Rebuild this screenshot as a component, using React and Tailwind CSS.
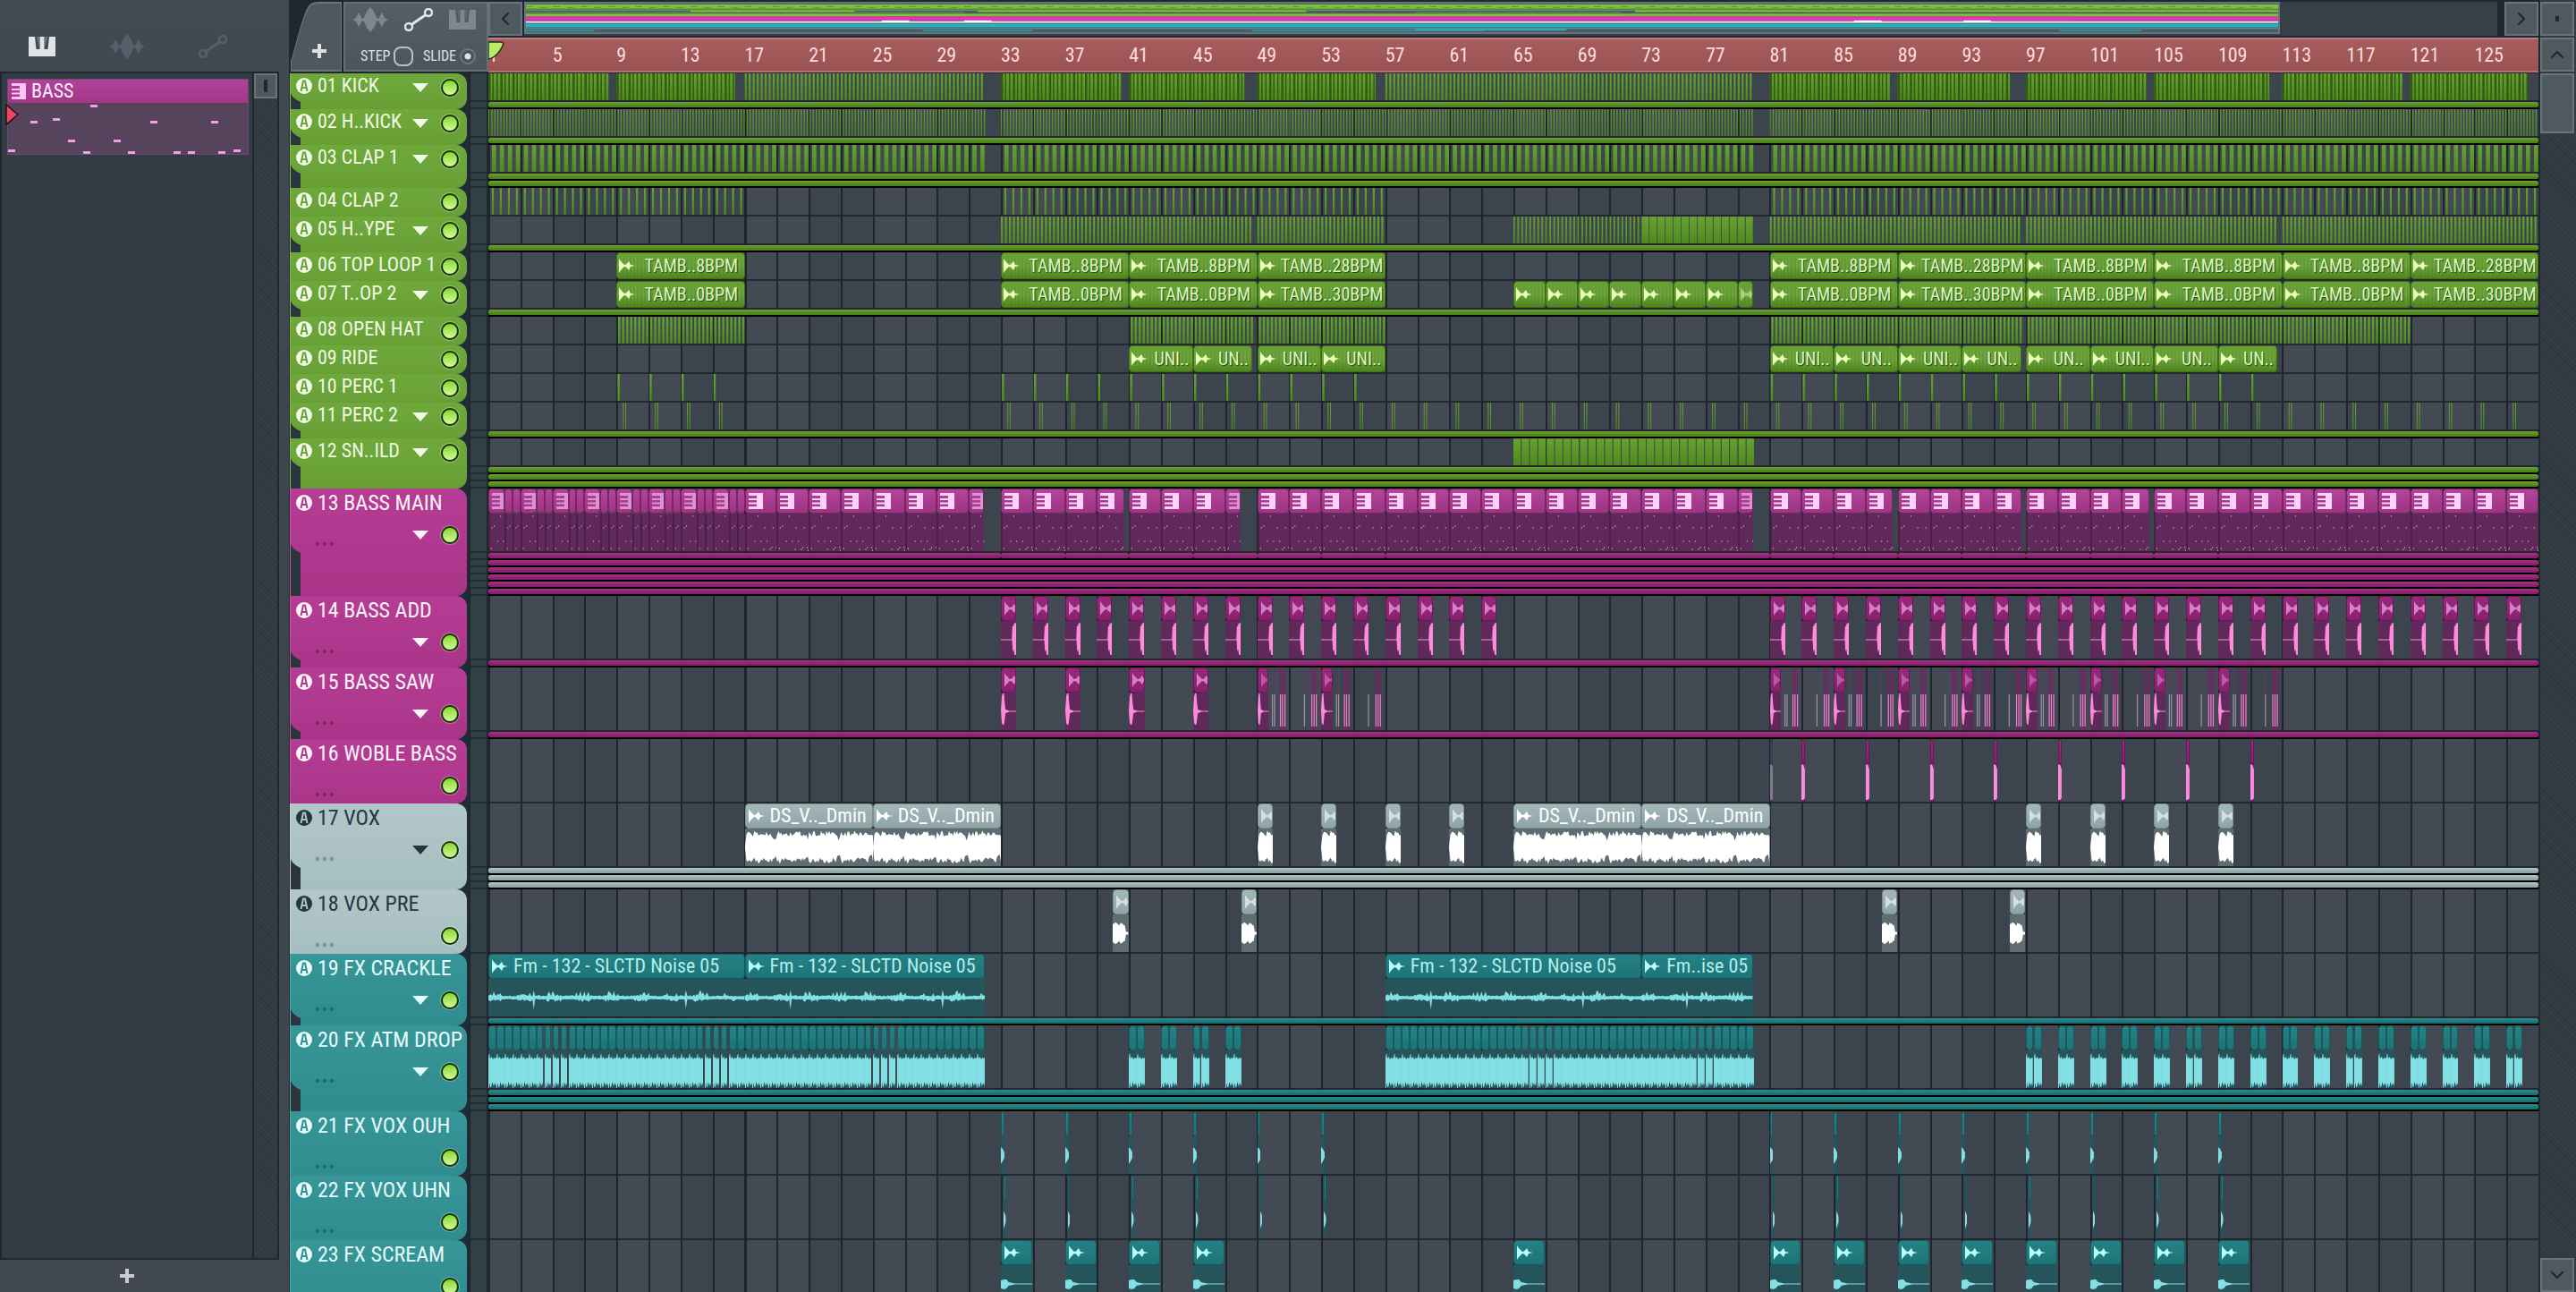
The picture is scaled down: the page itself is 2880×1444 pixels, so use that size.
import React, { useState } from "react";
import { ChevronDown, ChevronLeft, ChevronRight, ChevronUp } from "lucide-react";

const BARS = 128;

const themes = {
  green: {
    header: "bg-linear-to-b from-[#6fa93c] to-[#679f35] border-l-[#84bb52]",
    text: "text-[#f0f9e4]",
    badge: "text-[#6ba539]",
    dots: "bg-[#4c7c22]",
    head: "bg-linear-to-b from-[#68a034] via-[#619a2f] to-[#4f861e] border-[#3f7014]",
    body: "bg-[#3f5a2c]",
    lane: "bg-linear-to-b from-[#6aa036] via-[#568c24] to-[#4a7c1b]",
    label: "text-[#d9f5bd] text-shadow-[1px_1px_0_#2c4d10]",
    icon: "text-[#eaffb8]",
    wave: "#5b9429",
  },
  pink: {
    header: "bg-linear-to-b from-[#b53d93] to-[#a93589] border-l-[#c65aa8]",
    text: "text-[#fdf3fb]",
    badge: "text-[#b03a8e]",
    dots: "bg-[#84256a]",
    head: "bg-linear-to-b from-[#98297a] to-[#8a2070] border-[#6d1757]",
    body: "bg-[#5f2a5a]",
    lane: "bg-linear-to-b from-[#a23583] via-[#902573] to-[#861e6a]",
    label: "text-[#ffd7f6]",
    icon: "text-[#d67fc6]",
    wave: "#ff8adb",
  },
  vox: {
    header: "bg-linear-to-b from-[#b1c7ca] to-[#a7bec1] border-l-[#c4d6d8]",
    text: "text-[#22383c]",
    badge: "text-[#adc4c7]",
    dots: "bg-[#7d9396]",
    head: "bg-linear-to-b from-[#a3b7b9] to-[#90a5a7] border-[#7b9092]",
    body: "bg-[#5f6d73]",
    lane: "bg-linear-to-b from-[#b0c4c4] via-[#9cb0b0] to-[#8b9f9f]",
    label: "text-white",
    icon: "text-white",
    wave: "#ffffff",
  },
  teal: {
    header: "bg-linear-to-b from-[#379698] to-[#2f8c8f] border-l-[#55adae]",
    text: "text-[#e6fbfb]",
    badge: "text-[#339294]",
    dots: "bg-[#216c6f]",
    head: "bg-linear-to-b from-[#268184] to-[#1e7477] border-[#145c60]",
    body: "bg-[#25545b]",
    lane: "bg-linear-to-b from-[#31888a] via-[#207a7c] to-[#196c6f]",
    label: "text-[#b2eeee]",
    icon: "text-[#b5ffff]",
    wave: "#82e0e4",
  },
};

const range = (from, to, step) => {
  const out = [];
  for (let v = from; v < to - 0.001; v += step) out.push(v);
  return out;
};

const noise = (n) => {
  const v = Math.sin(n * 12.9898 + 4.1) * 43758.5453;
  return v - Math.floor(v);
};

const at = (starts, len, extra) => starts.map((start) => ({ start, len, ...extra }));

const bassMain = [
  ...range(1, 17, 2).flatMap((b) => [
    { start: b, len: 1, kind: "notes", icon: "faded" },
    { start: b + 1, len: 0.5, kind: "notes" },
    { start: b + 1.5, len: 0.5, kind: "notes" },
  ]),
  ...[17, 19, 21, 23, 25, 27, 29, 33, 35, 37, 41, 43, 45].map((b) => ({ start: b, len: 2, kind: "notes", icon: "solid" })),
  ...range(49, 79, 2).map((b) => ({ start: b, len: 2, kind: "notes", icon: "solid" })),
  ...[31, 47, 79].map((b) => ({ start: b, len: 0.95, kind: "notes", icon: "faded" })),
  ...range(81, 129, 2).map((b) => ({
    start: b,
    len: [87, 95, 103].includes(b) ? 1.7 : 2,
    kind: "notes",
    icon: "solid",
  })),
  { start: 39, len: 1.7, kind: "notes", icon: "solid" },
];

const loops = (a, b) => [
  ...at([9, 33, 41, 81, 97, 105, 113], 8, { label: a, icon: true, flat: true }),
  ...at([49, 89, 121], 8, { label: b, icon: true, flat: true }),
];

const everyFour = [...range(33, 57, 4), ...range(81, 113, 4)];

const atmStarts = [
  ...range(1, 32, 0.5),
  ...range(57, 80, 0.5),
  ...[...range(41, 49, 2), ...range(97, 129, 2)].flatMap((b) => [b, b + 0.5]),
];
const atmGated = [4, 4.5, 5, 5.5, 14, 14.5, 15, 15.5, 24.5, 25, 25.5, 26, 45, 65.5, 66, 66.5, 67, 76, 76.5, 77, 97, 107, 117, 127];

// stripes are [from bar, to bar, step, offset, width], blocks are [from bar, to bar]
const tracks = [
  {
    name: "01 KICK", theme: "green", subs: 1,
    blocks: [[1, 8.5], [9, 16.4], [33, 40.5], [41, 48.2], [49, 56.4], [81, 88.5], [89, 96], [97, 104.5], [105, 112.2], [113, 120.5], [121, 128.3]],
    stripes: [[17, 32, 0.25, 0, 0.13], [57, 80, 0.25, 0, 0.13]],
  },
  { name: "02 H..KICK", theme: "green", subs: 1, stripes: [[1, 32, 0.1875, 0, 0.07], [33, 80, 0.1875, 0, 0.07], [81, 129, 0.1875, 0, 0.07]] },
  { name: "03 CLAP 1", theme: "green", subs: 2, stripes: [[1, 32, 0.5, 0.22, 0.26], [33, 80, 0.5, 0.22, 0.26], [81, 129, 0.5, 0.22, 0.26]] },
  { name: "04 CLAP 2", theme: "green", subs: 0, stripes: [[1, 17, 0.5, 0.22, 0.12], [33, 57, 0.5, 0.22, 0.12], [81, 129, 0.5, 0.22, 0.12]] },
  {
    name: "05 H..YPE", theme: "green", subs: 1,
    stripes: [[33, 48.7, 0.25, 0, 0.13], [49, 57, 0.25, 0, 0.13], [65, 73, 0.25, 0, 0.1], [73, 80, 0.5, 0, 0.45], [81, 96.7, 0.25, 0, 0.13], [97, 112.7, 0.25, 0, 0.13], [113, 129, 0.25, 0, 0.13]],
  },
  { name: "06 TOP LOOP 1", theme: "green", subs: 0, clips: loops("TAMB..8BPM", "TAMB..28BPM") },
  {
    name: "07 T..OP 2", theme: "green", subs: 1,
    clips: [
      ...loops("TAMB..0BPM", "TAMB..30BPM"),
      ...at(range(65, 79, 2), 2, { icon: true, flat: true }),
      { start: 79, len: 0.95, icon: "faded", flat: true },
    ],
  },
  { name: "08 OPEN HAT", theme: "green", subs: 0, stripes: [[9, 17, 0.25, 0.1, 0.14], [41, 48.7, 0.25, 0.1, 0.14], [49, 57, 0.25, 0.1, 0.14], [81, 96.7, 0.25, 0.1, 0.14], [97, 121, 0.25, 0.1, 0.14]] },
  {
    name: "09 RIDE", theme: "green", subs: 0,
    clips: [
      ...at([41, 49, 53, 81, 89, 101], 4, { label: "UNI..", icon: true, flat: true }),
      ...at([85, 97, 105], 4, { label: "UN..", icon: true, flat: true }),
      ...at([45, 93, 109], 3.7, { label: "UN..", icon: true, flat: true }),
    ],
  },
  { name: "10 PERC 1", theme: "green", subs: 0, stripes: [[9, 17, 2, 0.06, 0.14], [33, 57, 2, 0.06, 0.14], [81, 113, 2, 0.06, 0.14]] },
  {
    name: "11 PERC 2", theme: "green", subs: 1,
    stripes: [[9, 17, 2, 0.4, 0.06], [9, 17, 2, 0.55, 0.06], [33, 129, 2, 0.4, 0.06], [33, 129, 2, 0.55, 0.06]],
  },
  { name: "12 SN..ILD", theme: "green", subs: 3, stripes: [[65, 79.9, 0.52, 0, 0.46]] },
  { name: "13 BASS MAIN", theme: "pink", tall: true, subs: 6, cuts: [...range(33, 61, 4), ...range(81, 113, 4)], clips: bassMain },
  { name: "14 BASS ADD", theme: "pink", tall: true, subs: 1, clips: at([...range(33, 65, 2), ...range(81, 129, 2)], 0.95, { kind: "add", icon: true }) },
  {
    name: "15 BASS SAW", theme: "pink", tall: true, subs: 1,
    clips: [
      ...at([33, 37, 41, 45], 0.97, { kind: "saw", icon: true }),
      ...at([49, 53, ...range(81, 113, 4)], 0.72, { kind: "saw", icon: "faded" }),
    ],
    slices: [49, 53, ...range(81, 113, 4)],
  },
  {
    name: "16 WOBLE BASS", theme: "pink", tall: true, subs: 0,
    clips: [{ start: 81, len: 0.2, kind: "full", muted: true }, ...at(range(83, 113, 4), 0.22, { kind: "full" })],
  },
  {
    name: "17 VOX", theme: "vox", tall: true, subs: 3,
    clips: [
      ...at([17, 25, 65, 73], 8, { kind: "vox", icon: true, label: "DS_V.._Dmin" }),
      ...at([49, 53, 57, 61, 97, 101, 105, 109], 0.95, { kind: "vox", icon: "faded" }),
    ],
  },
  { name: "18 VOX PRE", theme: "vox", tall: true, subs: 0, clips: at([40, 48, 88, 96], 0.97, { kind: "pre", icon: "faded" }) },
  {
    name: "19 FX CRACKLE", theme: "teal", tall: true, subs: 1,
    clips: [
      ...at([1, 57], 16, { kind: "crackle", icon: true, label: "Fm - 132 - SLCTD Noise 05" }),
      { start: 17, len: 15, kind: "crackle", icon: true, label: "Fm - 132 - SLCTD Noise 05" },
      { start: 73, len: 6.95, kind: "crackle", icon: true, label: "Fm..ise 05" },
    ],
  },
  {
    name: "20 FX ATM DROP", theme: "teal", tall: true, subs: 3,
    clips: atmStarts.map((start) => ({ start, len: atmGated.includes(start) ? 0.43 : 0.5, kind: "drop" })),
  },
  { name: "21 FX VOX OUH", theme: "teal", tall: true, subs: 0, clips: at(everyFour, 0.22, { kind: "blip" }) },
  { name: "22 FX VOX UHN", theme: "teal", tall: true, subs: 0, clips: at(everyFour.map((b) => b + 0.18), 0.14, { kind: "blip" }) },
  { name: "23 FX SCREAM", theme: "teal", tall: true, subs: 0, clips: at([33, 37, 41, 45, 65, ...range(81, 113, 4)], 1.95, { kind: "scream", icon: true }) },
];

const pos = (start, len) => ({
  left: `${((start - 1) / BARS) * 100}%`,
  width: `${(len / BARS) * 100}%`,
});

const PianoIcon = ({ className }) => (
  <svg viewBox="0 0 30 22" className={className} fill="currentColor">
    <path d="M0 0h7l1.500 14h4V0h5v14h4L23 0h7v22H0z" />
    <path d="M9 0h2.500v12zM18.500 0H21l-2.500 12z" opacity="0.350" />
  </svg>
);

const WaveIcon = ({ className }) => (
  <svg viewBox="0 0 40 28" className={className} fill="currentColor">
    <path d="M0 14l4-2 3-6 4 7 2-1 3-7 4-5 4 5 3 7 2 1 4-7 3 6 4 2-4 2-3 6-4-7-2 1-3 7-4 5-4-5-3-7-2-1-4 7-3-6z" />
  </svg>
);

const AutomationIcon = ({ className }) => (
  <svg viewBox="0 0 32 26" className={className} fill="none" stroke="currentColor" strokeWidth="2.400">
    <circle cx="5" cy="21" r="4" />
    <circle cx="27" cy="5" r="4" />
    <path d="M8 18.500L24 7.500" strokeWidth="3" />
  </svg>
);

const ClipWaveIcon = ({ className }) => (
  <svg viewBox="0 0 18 16" className={className} fill="currentColor">
    <path d="M0 0l2 3 4 4 2-.5L11 3l2 4 5 1-5 1-2 4-3-3.500L6 9l-4 4-2 3z" />
  </svg>
);

const PatternIcon = ({ className }) => (
  <svg viewBox="0 0 16 18" className={className} fill="currentColor">
    <path d="M0 0h16v18H0v-3h9v-2.500H0v-2h9V8H0V6h9V3H0z" />
  </svg>
);

const Badge = ({ className }) => (
  <svg viewBox="0 0 18 18" className="h-[18px] w-[18px] shrink-0">
    <circle cx="9" cy="9" r="9" fill="currentColor" />
    <path className={className} d="M5.500 15L8 3.500h2L12.500 15M7 11h4" fill="none" stroke="currentColor" strokeWidth="2" />
  </svg>
);

function wavePoints(samples, amp) {
  const top = [];
  const bottom = [];
  for (let i = 0; i <= samples; i++) {
    const x = (i / samples) * 100;
    const [up, down] = amp(i, i / samples);
    top.push(`${x.toFixed(2)},${(21 - up * 20).toFixed(1)}`);
    bottom.unshift(`${x.toFixed(2)},${(21 + down * 20).toFixed(1)}`);
  }
  return [...top, ...bottom].join(" ");
}

function shapeFor(kind, len) {
  switch (kind) {
    case "vox":
      return wavePoints(Math.round(len * 12), (i) => {
        if (i < 1) return [0.02, 0.02];
        const dip = i % 24 > 20 ? 0.2 : 0;
        return [0.58 + noise(i) * 0.34 - dip, 0.58 + noise(i + 99) * 0.34 - dip];
      });
    case "pre":
      return wavePoints(14, (i, t) => {
        const v = t > 0.85 ? 0.08 : 0.45 + noise(i) * 0.2 - t * 0.1;
        return [v, v];
      });
    case "crackle":
      return wavePoints(Math.round(len * 12), (i) => {
        const burst = Math.sin(i / 3.5) > 0 ? 0.42 : 0.12;
        const spike = i % 114 === 34 ? 0.55 : 0;
        return [0.07 + noise(i) * noise(i + 3) * burst + spike * 0.5, 0.07 + noise(i + 7) * burst * 0.4 + spike];
      });
    case "drop":
      return "0,8 8,4 16,4 20,9 45,7 55,10 75,8 85,9 100,8 100,37 90,40 80,36 65,40 50,35 36,41 25,41 15,36 8,42 0,42";
    case "add":
      return "0,20.5 72,20.5 76,6 84,5 86,3 100,2 100,38 90,38 84,32 78,34 74,21.5 0,21.5";
    case "saw":
      return "0,20 6,4 12,1 20,1 25,12 30,19 55,20.5 100,20.5 100,21.500 55,21.500 30,23 25,30 20,36 12,36 6,34";
    case "full":
      return "0,0 60,1 100,6 100,38 60,40 0,40";
    case "blip":
      return "0,12 50,14 100,18 100,24 50,28 0,31";
    case "scream":
      return "0,17 10,16 18,16 25,19 45,20.500 100,20.500 100,21.500 45,21.500 25,23 18,26 10,27 0,26";
    default:
      return "";
  }
}

const noteMarks = [
  [0.1, 16], [0.25, 14], [0.7, 3], [0.9, 31], [1.15, 16], [1.3, 31], [1.5, 40],
  [1.7, 16], [1.6, 38], [1.9, 38], [0.05, 39], [1.1, 40], [0.5, 31], [1.95, 41],
];

const Notes = ({ len }) => (
  <svg viewBox={`0 0 ${len} 42`} preserveAspectRatio="none" className="h-full w-full" fill="#b377aa">
    {noteMarks
      .filter(([x]) => x < len)
      .map(([x, y]) => (
        <rect key={`${x}-${y}`} x={x} y={y - 1} width="0.070" height="2" />
      ))}
  </svg>
);

const Clip = ({ clip, theme }) => {
  const { start, len, kind, icon, label, flat, muted } = clip;
  const pattern = kind === "notes";
  const faded = icon === "faded";

  if (flat) {
    return (
      <div className={`absolute inset-y-0 flex items-center gap-1 overflow-hidden rounded-sm border pl-0.5 ${theme.head}`} style={pos(start, len)}>
        <div className="absolute inset-0 bg-[repeating-linear-gradient(90deg,#ffffff18_0_2px,transparent_2px_4px)] mask-[linear-gradient(transparent,black_40%,black_60%,transparent)]" />
        <ClipWaveIcon className={`relative h-4 w-[18px] shrink-0 ${theme.icon} ${faded ? "opacity-50" : ""}`} />
        {label && <span className={`relative flex-1 text-center text-[20px] leading-7 whitespace-nowrap ${theme.label}`}>{label}</span>}
      </div>
    );
  }

  return (
    <div className="absolute inset-y-0 flex flex-col overflow-hidden" style={pos(start, len)}>
      <div
        className={`flex h-7 shrink-0 items-center gap-1.5 overflow-hidden rounded-sm border ${
          muted
            ? "border-[#363752] bg-[#43435c]"
            : pattern
              ? "border-[#7d2467] bg-linear-to-b from-[#b2459a] to-[#9d3483]"
              : theme.head
        } ${icon ? "pl-0.5" : ""}`}
      >
        {pattern && icon && <PatternIcon className={`ml-px h-[18px] w-4 shrink-0 ${faded ? "text-[#dc92d1]" : "text-[#ffd2fa]"}`} />}
        {!pattern && icon && <ClipWaveIcon className={`ml-px h-4 w-[18px] shrink-0 ${theme.icon} ${faded ? "opacity-60" : ""}`} />}
        {label && <span className={`text-[22px] leading-6 whitespace-nowrap ${theme.label}`}>{label}</span>}
      </div>
      <div className={`min-h-0 flex-1 ${theme.body} ${pattern ? "border-l-2 border-[#4c1f49]" : ""}`}>
        {pattern ? (
          <Notes len={len} />
        ) : (
          <svg viewBox="0 0 100 42" preserveAspectRatio="none" className="h-full w-full">
            <polygon points={shapeFor(kind, len)} fill={muted ? "#7d7d90" : theme.wave} />
          </svg>
        )}
      </div>
    </div>
  );
};

const Stripes = ({ track }) => {
  const { stripes = [], blocks = [] } = track;
  let hits = "";
  stripes.forEach(([from, to, step, offset, width]) => {
    range(from, to, step).forEach((b) => {
      hits += `M${(b - 1 + offset).toFixed(3)} 0h${width}v31h-${width}z`;
    });
  });
  let gaps = "";
  blocks.forEach(([from, to]) => {
    range(from, to, 0.25).forEach((b, i) => {
      const w = i % 3 === 0 ? 0.14 : 0.09;
      gaps += `M${(b - 1).toFixed(3)} 0h${w}v31h-${w}z`;
    });
  });
  const id = `hit-${track.name.slice(0, 2)}`;
  return (
    <svg viewBox="0 0 128 31" preserveAspectRatio="none" className="absolute inset-0 h-full w-full">
      <linearGradient id={id} gradientUnits="userSpaceOnUse" x1="0" y1="0" x2="0" y2="31">
        <stop offset="0" stopColor="#67a133" />
        <stop offset="1" stopColor="#4f8a1e" />
      </linearGradient>
      {blocks.map(([from, to]) => (
        <rect key={from} x={from - 1} width={to - from} height="31" fill={`url(#${id})`} />
      ))}
      <path d={gaps} fill="#335c12" />
      <path d={hits} fill={`url(#${id})`} />
    </svg>
  );
};

// gated fragments that follow each saw clip
const sliceMarks = [[0.92, 0], [1.05, 0], [1.42, 1], [1.55, 1], [1.7, 1], [2.92, 0], [3.38, 1], [3.52, 1], [3.66, 1]];

const Slices = ({ starts }) => (
  <svg viewBox="0 0 128 70" preserveAspectRatio="none" className="absolute inset-0 h-full w-full">
    {starts.flatMap((s) =>
      sliceMarks.map(([x, on]) => (
        <g key={`${s}-${x}`}>
          <rect x={s - 1 + x} y="0" width="0.070" height="70" fill={on ? "#7c1f66" : "#54405f"} />
          <rect x={s - 1 + x} y="30" width="0.070" height="36" fill={on ? "#e97fca" : "#9890a5"} />
        </g>
      ))
    )}
  </svg>
);

const SubLane = ({ theme, cuts = [] }) => {
  const edges = [1, ...cuts, 129];
  return (
    <div className="flex h-2 bg-black pb-px">
      {edges.slice(0, -1).map((e, i) => (
        <div key={e} className={`h-[6px] rounded-xs ${theme.lane}`} style={{ width: `${((edges[i + 1] - e) / BARS) * 100}%` }} />
      ))}
    </div>
  );
};

const TrackLanes = ({ track }) => {
  const theme = themes[track.theme];
  return (
    <div className="shrink-0">
      <div className={`border-b-2 border-[#1b2129]/80 ${track.tall ? "h-[72px]" : "h-8"}`}>
        <div className="relative h-full">
          {(track.stripes || track.blocks) && <Stripes track={track} />}
          {track.slices && <Slices starts={track.slices} />}
          {(track.clips || []).map((c) => (
            <Clip key={c.start} clip={c} theme={theme} />
          ))}
        </div>
      </div>
      {range(0, track.subs, 1).map((i) => (
        <SubLane key={i} theme={theme} cuts={i === 0 ? track.cuts : []} />
      ))}
    </div>
  );
};

const Led = ({ on, onClick, label }) => (
  <button
    type="button"
    aria-label={label}
    onClick={onClick}
    className={`h-5 w-5 shrink-0 rounded-full border-2 border-[#173509] ring-1 ring-white/30 ${
      on ? "bg-linear-to-b from-[#86d62a] to-[#d3fb92]" : "bg-[#35502a]"
    }`}
  />
);

const Arrow = () => (
  <svg viewBox="0 0 18 10" className="h-2.5 w-[18px] shrink-0" fill="currentColor">
    <path d="M0 0h18l-9 10z" />
  </svg>
);

const TrackHeader = ({ track, muted, onMute }) => {
  const theme = themes[track.theme];
  const led = <Led on={!muted} onClick={onMute} label={`Mute ${track.name}`} />;
  return (
    <div className={`relative shrink-0 overflow-hidden rounded-r-xl border-l ${theme.header} ${theme.text}`}>
      {track.tall ? (
        <div className="flex h-[72px] flex-col">
          <div className="flex h-8 items-center gap-1.5 pl-1.5">
            <Badge className={theme.badge} />
            <span className="text-[24px] leading-8 whitespace-nowrap">{track.name}</span>
          </div>
          <div className="flex h-10 items-center gap-3.5 pr-[9px] pl-7">
            <span className="mt-5 flex flex-1 gap-1">
              <i className={`h-1 w-1 ${theme.dots}`} />
              <i className={`h-1 w-1 ${theme.dots}`} />
              <i className={`h-1 w-1 ${theme.dots}`} />
            </span>
            {track.subs > 0 && <Arrow />}
            {led}
          </div>
        </div>
      ) : (
        <div className="flex h-8 items-center pr-[9px] pl-1.5">
          <div className="flex min-w-0 flex-1 items-center gap-1.5 pb-1">
            <Badge className={theme.badge} />
            <span className="text-[22px] leading-7 whitespace-nowrap">{track.name}</span>
          </div>
          {track.subs > 0 && (
            <span className="mr-3.5">
              <Arrow />
            </span>
          )}
          {led}
        </div>
      )}
      {range(0, track.subs, 1).map((i) => (
        <div key={i} className="h-2">
          <div className="-ml-px h-2 w-3 bg-[#2b353d]" />
        </div>
      ))}
      {track.subs > 0 && (
        <svg viewBox="0 0 12 14" className={`absolute -left-px h-3.5 w-3 ${track.tall ? "top-[58px]" : "top-[18px]"}`}>
          <path d="M0 0c1 7 5 11 12 14H0z" fill="#2b353d" />
        </svg>
      )}
    </div>
  );
};

const miniBands = [
  { y: 1, h: 5, fill: "#7ac43a", spans: [[0, 128]] },
  { y: 7, h: 1, fill: "#7ac43a", spans: [[0, 128]] },
  { y: 8, h: 2, fill: "#7ac43a", spans: [[12, 24], [33, 57], [81, 128]] },
  { y: 10, h: 1, fill: "#5f9a3a", spans: [[0, 32], [65, 80]] },
  { y: 12, h: 3, fill: "#7ac43a", spans: [[0, 128]] },
  { y: 15, h: 6, fill: "#dc3bb0", spans: [[0, 128]] },
  { y: 19, h: 2, fill: "#b83f9c", spans: [[0, 32], [57, 80], [113, 128]] },
  { y: 21, h: 2, fill: "#d5eff2", spans: [[0, 128]] },
  { y: 20, h: 2, fill: "#f2ffff", spans: [[26, 28], [32, 34], [97, 99], [105, 107]] },
  { y: 24, h: 4, fill: "#2eb1b9", spans: [[0, 128]] },
  { y: 29, h: 1, fill: "#2eb1b9", spans: [[0, 128]] },
  { y: 31, h: 2, fill: "#2e949b", spans: [[0, 5], [29, 37], [53, 70], [112, 118]] },
  { y: 30, h: 2, fill: "#2eb1b9", spans: [[65, 76]] },
];

const MiniMap = () => (
  <div className="mr-2 flex-1 bg-[#373f47]">
    <div className="h-[36px] w-[89%] border-2 border-[#68747b] bg-[#4f5b62]">
      <svg viewBox="0 0 128 34" preserveAspectRatio="none" className="h-full w-full">
        {miniBands.flatMap((b) =>
          b.spans.map(([from, to]) => <rect key={`${b.y}-${from}`} x={from} y={b.y} width={to - from} height={b.h} fill={b.fill} />)
        )}
        {range(0, 128, 1).map((i) => (
          <rect key={i} x={i} y={3 + (i % 2)} width="0.500" height="1" fill="#5b8f35" />
        ))}
      </svg>
    </div>
  </div>
);

const Ruler = () => (
  <div className="relative mt-0.5 h-[39px] border-y-2 border-t-[#c27c7d] border-b-[#b96f71] bg-linear-to-b from-[#a55d5e] to-[#9a5253]">
    <div className="grid h-full grid-cols-[repeat(32,minmax(0,1fr))] items-center text-[22px] leading-6 text-[#ffdcdc]">
      {range(1, 129, 4).map((n) => (
        <span key={n}>{n}</span>
      ))}
    </div>
    <svg viewBox="0 0 18 22" className="absolute top-0.5 left-0 h-[22px] w-[18px]">
      <path d="M0 1h14c3 0 3 2 2 4C13 12 7 19 0 20z" fill="#b9ea6c" stroke="#1f3310" strokeWidth="1.500" />
    </svg>
  </div>
);

const panelButton = "flex shrink-0 items-center justify-center border-2 border-[#69737a] bg-[#4f5960] text-[#20272d]";
const hatch = "bg-[repeating-linear-gradient(45deg,#353e45_0_2px,#2f383f_2px_4px)]";

const previewNotes = [
  [4, 53], [29, 21], [54, 18], [71, 42], [88, 55], [96, 3], [122, 42], [138, 55],
  [163, 21], [189, 55], [205, 55], [231, 21], [239, 55], [256, 53],
];

const PatternPicker = () => (
  <aside className="flex w-[323px] shrink-0 flex-col bg-linear-to-b from-[#414a52] via-[#3c454d] to-[#41484f] pr-[11px]">
    <div className="flex h-20 shrink-0 items-center gap-[60px] pt-6 pl-8">
      <button type="button" aria-label="Patterns">
        <PianoIcon className="h-[22px] w-[30px] text-[#dfe4e7]" />
      </button>
      <button type="button" aria-label="Audio clips">
        <WaveIcon className="h-7 w-10 text-[#55606a]" />
      </button>
      <button type="button" aria-label="Automation clips">
        <AutomationIcon className="h-[26px] w-8 text-[#55606a]" />
      </button>
    </div>
    <div className="flex min-h-0 flex-1 border-2 border-[#20282f] bg-[#313c44]">
      <div className="relative flex-1 pt-1.5 pr-1 pl-1.5">
        <div className="border border-[#6d4a72]">
          <div className="flex h-[26px] items-center gap-1.5 bg-linear-to-b from-[#b0429a] to-[#a43688] pl-1">
            <PatternIcon className="h-[18px] w-4 text-[#ffc4f4]" />
            <span className="text-[22px] leading-6 text-[#fff0fc]">BASS</span>
          </div>
          <svg viewBox="0 0 268 57" preserveAspectRatio="none" className="h-[57px] w-full bg-[#56435c]">
            {previewNotes.map(([x, y]) => (
              <rect key={x} x={x - 4} y={y - 1} width="8" height="3" fill="#f0a0ea" />
            ))}
          </svg>
        </div>
        <svg viewBox="0 0 16 24" className="absolute top-[34px] left-1 h-6 w-4">
          <path d="M1 1c3 2 6 6 13 11C8 17 4 21 1 23z" fill="#f0455c" stroke="#1d1416" strokeWidth="1.500" />
        </svg>
      </div>
      <div className={`w-7 shrink-0 border-l-2 border-[#20282f] ${hatch}`}>
        <button type="button" aria-label="Scroll patterns" className="flex h-7 w-full items-center justify-center border-2 border-[#69737a] bg-[#4f5960]">
          <span className="h-3.5 w-1 bg-[#20272d]" />
        </button>
      </div>
    </div>
    <button type="button" aria-label="Add pattern" className="flex h-9 shrink-0 items-center justify-center pr-7 text-[#c8ccd0]">
      <svg viewBox="0 0 16 16" className="h-4 w-4" fill="currentColor">
        <path d="M6 0h4v6h6v4h-6v6H6v-6H0V6h6z" />
      </svg>
    </button>
  </aside>
);

const Toolbar = () => (
  <div className="flex h-20 w-[222px] shrink-0">
    <button type="button" aria-label="Add track" className="h-20 w-[60px] shrink-0 text-[#dde1e4]">
      <svg viewBox="0 0 60 80" className="h-full w-full">
        <path d="M1 79V68C7 50 11 28 18 13 22 5 25 3 31 3h27v76z" fill="#4f585f" stroke="#69737a" strokeWidth="2" />
        <path d="M0 80V68C6 50 10 28 17 12 21 3 24 1 31 1h28v79" fill="none" stroke="#20282f" strokeWidth="2" />
        <path d="M31 49h4v6h6v4h-6v6h-4v-6h-6v-4h6z" fill="currentColor" />
      </svg>
    </button>
    <div className="mt-0.5 flex min-w-0 flex-1 flex-col border-2 border-[#656f76] bg-linear-to-b from-[#545e65] to-[#4c555c]">
      <div className="flex h-9 items-center justify-between pr-3 pl-2">
        <button type="button" aria-label="Audio clips">
          <WaveIcon className="h-7 w-10 text-[#7d878c]" />
        </button>
        <button type="button" aria-label="Automation clips">
          <AutomationIcon className="h-[26px] w-8 text-[#e2e6e8]" />
        </button>
        <button type="button" aria-label="Patterns">
          <PianoIcon className="h-[22px] w-[30px] text-[#7d878c]" />
        </button>
      </div>
      <div className="flex flex-1 items-center justify-between pt-2 pr-3 pl-[17px] text-[16px] leading-5 text-[#dde1e4]">
        <label className="flex items-center gap-1">
          STEP
          <input type="checkbox" className="h-[22px] w-[22px] shrink-0 appearance-none rounded-lg border-2 border-[#b9c0c4]" />
        </label>
        <label className="flex items-center gap-1">
          SLIDE
          <input
            type="radio"
            defaultChecked
            className="h-[18px] w-[18px] shrink-0 appearance-none rounded-full border-2 border-[#6d767c] bg-[#4a535a] checked:bg-[radial-gradient(circle,#dde1e4_0_3px,#4a535a_4px)]"
          />
        </label>
      </div>
    </div>
  </div>
);

const App = () => {
  const [muted, setMuted] = useState({});

  return (
    <div className="flex h-screen overflow-hidden bg-[#20282f] font-['Roboto_Condensed',Roboto,sans-serif]">
      <PatternPicker />
      <main className="ml-px flex min-w-0 flex-1 flex-col">
        <div className="flex h-[82px] shrink-0 bg-[#20282f]">
          <Toolbar />
          <div className="min-w-0 flex-1 pt-0.5">
            <div className="flex h-[38px]">
              <button type="button" aria-label="Scroll left" className={`h-[38px] w-[38px] ${panelButton}`}>
                <ChevronLeft className="h-6 w-6" strokeWidth={2} />
              </button>
              <div className="w-0.5 bg-[#20282f]" />
              <MiniMap />
              <button type="button" aria-label="Scroll right" className={`h-[38px] w-[38px] ${panelButton}`}>
                <ChevronRight className="h-6 w-6" strokeWidth={2} />
              </button>
            </div>
            <Ruler />
          </div>
        </div>
        <div className="flex min-h-0 flex-1 overflow-hidden">
          <div className="flex w-[200px] shrink-0 flex-col bg-[#202b33] pr-0.5">
            {tracks.map((t) => (
              <TrackHeader
                key={t.name}
                track={t}
                muted={muted[t.name]}
                onMute={() => setMuted((m) => ({ ...m, [t.name]: !m[t.name] }))}
              />
            ))}
          </div>
          <div className="flex w-[22px] shrink-0 flex-col border-x-2 border-[#20282f] bg-[#333f47]">
            {tracks.map((t) => (
              <div key={t.name} className="shrink-0">
                <div className={`border-b-2 border-[#232d35] ${t.tall ? "h-[72px]" : "h-8"}`} />
                {range(0, t.subs, 1).map((i) => (
                  <div key={i} className="h-2 border-b-2 border-[#232d35]" />
                ))}
              </div>
            ))}
          </div>
          <div className="relative flex min-w-0 flex-1 flex-col overflow-hidden bg-[repeating-linear-gradient(90deg,#1e252d_0_2px,transparent_2px_1.5625%),repeating-linear-gradient(90deg,#434a53_0_3.125%,#3c444d_3.125%_6.25%)]">
            {tracks.map((t) => (
              <TrackLanes key={t.name} track={t} />
            ))}
          </div>
        </div>
      </main>
      <div className={`ml-0.5 flex w-10 shrink-0 flex-col pt-0.5 pr-0.5 ${hatch}`}>
        <button type="button" aria-label="Options" className={`h-[38px] ${panelButton}`}>
          <span className="h-1.5 w-1 bg-[#20272d]" />
        </button>
        <button type="button" aria-label="Scroll up" className={`mt-0.5 h-[38px] ${panelButton}`}>
          <ChevronUp className="h-6 w-6" strokeWidth={2} />
        </button>
        <div className="mt-0.5 h-[67px] shrink-0 border-2 border-[#69737a] bg-[#4f5960]" />
        <div className="flex-1" />
        <button type="button" aria-label="Scroll down" className={`h-[38px] ${panelButton}`}>
          <ChevronDown className="h-6 w-6" strokeWidth={2} />
        </button>
      </div>
    </div>
  );
};

export default App;
